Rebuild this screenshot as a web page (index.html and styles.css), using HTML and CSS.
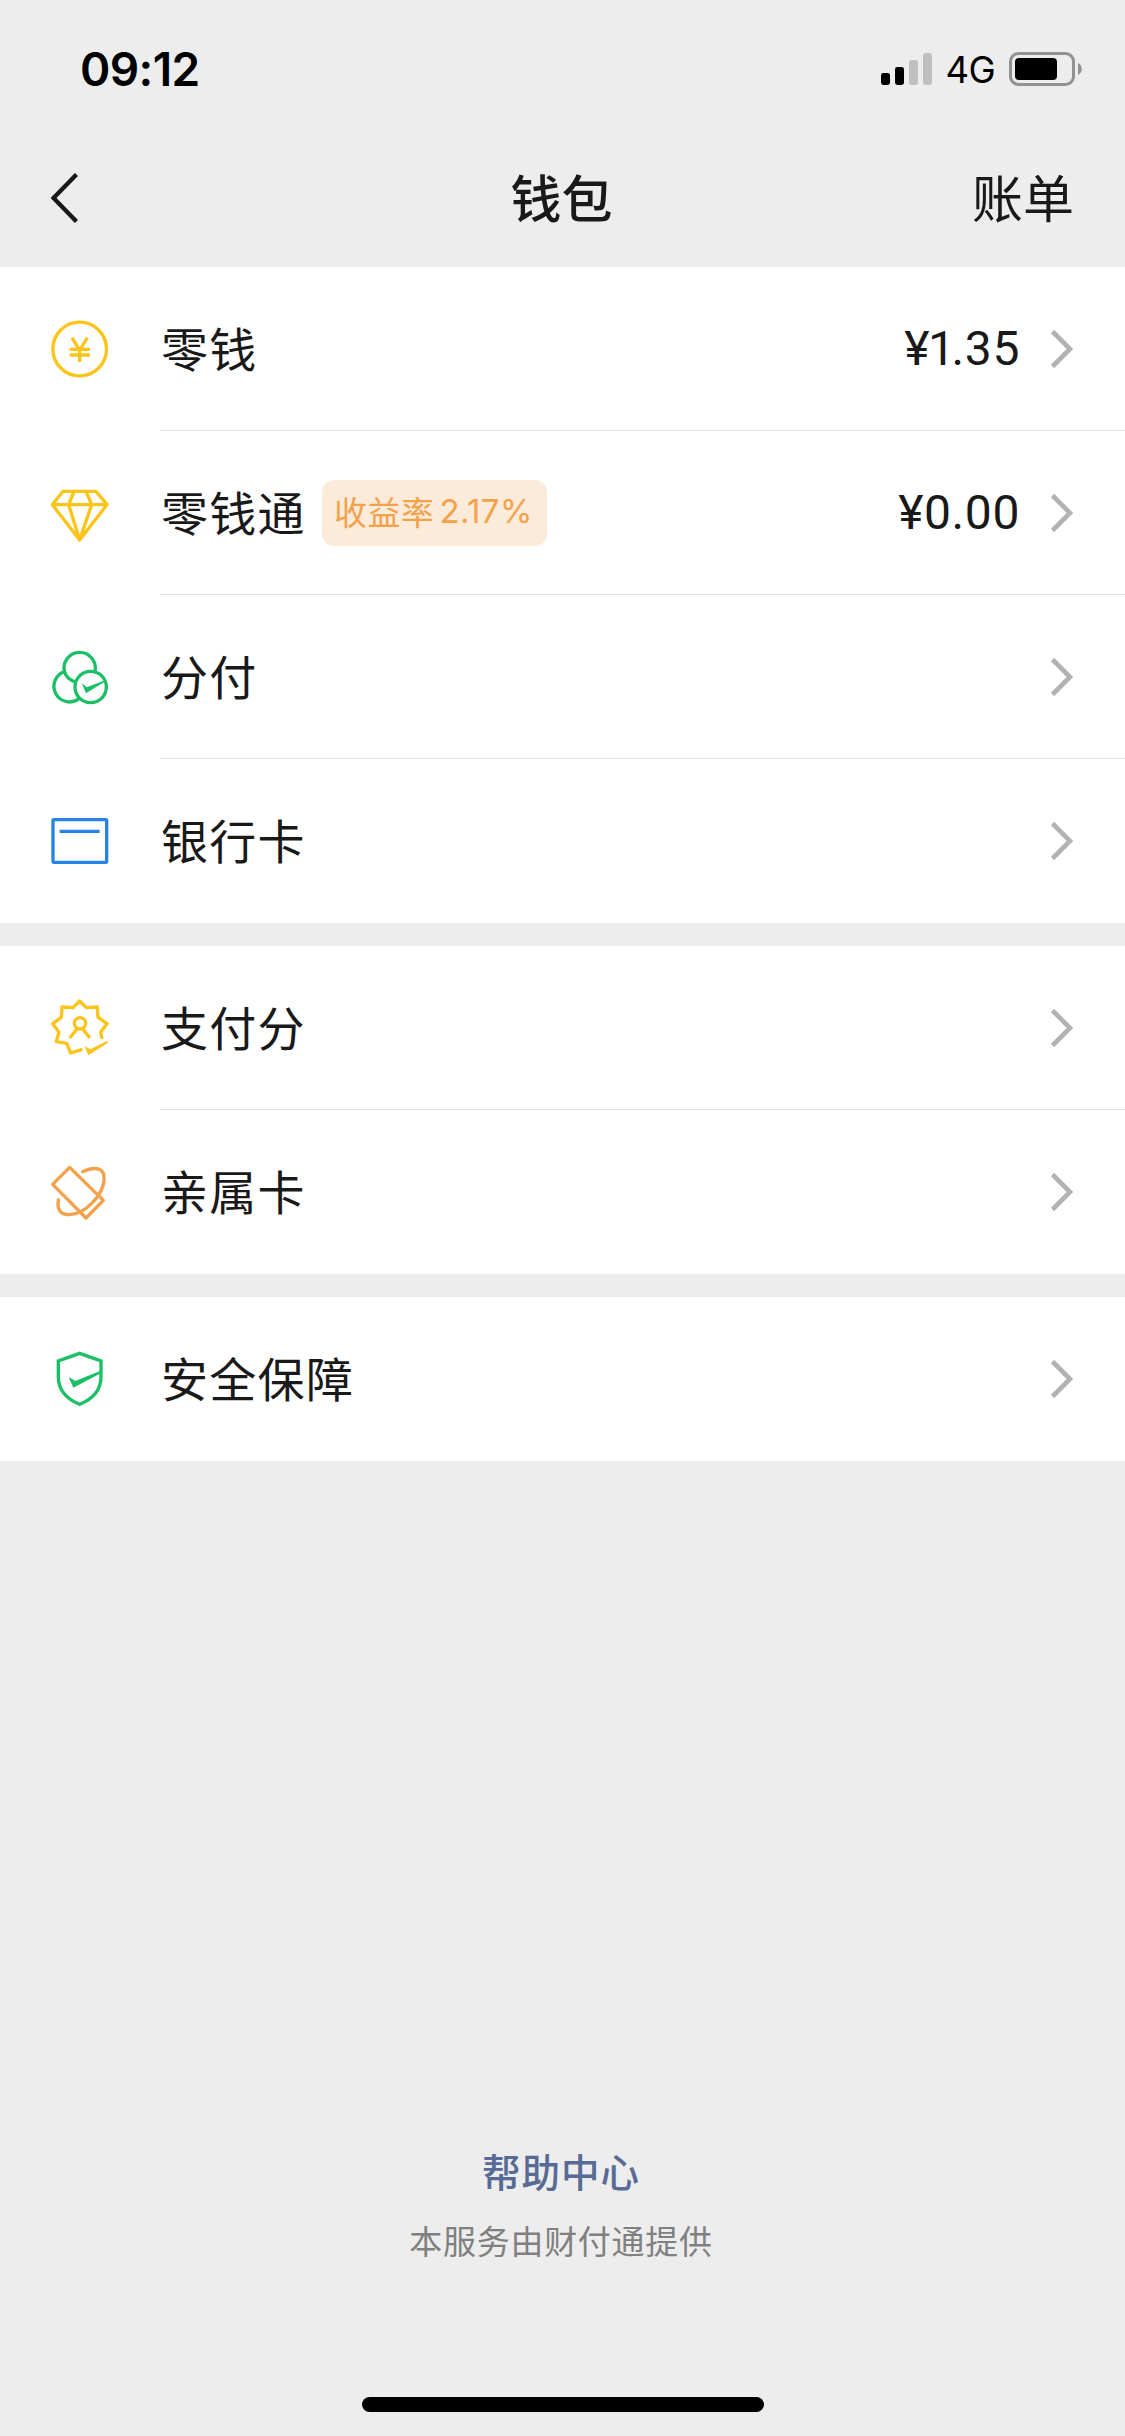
FILE: index.html
```html
<!DOCTYPE html>
<html lang="zh-CN">
<head>
<meta charset="utf-8">
<title>钱包</title>
<link rel="stylesheet" href="styles.css">
</head>
<body>
<div class="screen">
  <header class="top">
    <div class="status">
      <span class="time">09:12</span>
      <div class="indicators">
        <svg class="signal" viewBox="0 0 51 32">
          <rect x="0" y="20" width="9" height="12" rx="2.4"/>
          <rect x="14" y="14" width="9" height="18" rx="2.4"/>
          <rect class="dim" x="28" y="7" width="9" height="25" rx="2.4"/>
          <rect class="dim" x="42" y="0" width="9" height="32" rx="2.4"/>
        </svg>
        <span class="network">4G</span>
        <svg class="battery" viewBox="0 0 74 34">
          <rect class="case" x="1.500" y="1.500" width="63" height="31" rx="8"/>
          <rect x="6" y="6" width="42" height="22" rx="4"/>
          <path class="nub" d="M69 11c5 2 5 10 0 12z"/>
        </svg>
      </div>
    </div>
    <nav class="nav">
      <svg class="back" viewBox="0 0 27 50"><path d="M25.500 1.500 2.500 25l23 23.500"/></svg>
      <h1 class="title">钱包</h1>
      <span class="bill">账单</span>
    </nav>
  </header>

  <main class="groups">
    <section class="group">
      <div class="row">
        <svg class="icon yellow" viewBox="61 87 180 180">
          <circle cx="150" cy="177" r="80.500"/>
          <path d="M127 143l23 38 23-38M120 178h61M120 195h61M150 180v36"/>
        </svg>
        <div class="cell">
          <span class="label">零钱</span>
          <span class="amount">¥<span class="narrow">1</span>.35</span>
          <svg class="chevron" viewBox="0 0 24 40"><path d="M2.500 2.500 20 20 2.500 37.500"/></svg>
        </div>
      </div>
      <div class="row">
        <svg class="icon yellow" viewBox="61 579 180 180">
          <path d="M100 604h99l33 40-82 106-82-106zM68 644h164M133 604l-16 40 33 106 36-106-17-40" stroke-linejoin="round"/>
        </svg>
        <div class="cell">
          <span class="label">零钱通</span>
          <span class="badge">收益率<span class="rate">2.17%</span></span>
          <span class="amount">¥0.00</span>
          <svg class="chevron" viewBox="0 0 24 40"><path d="M2.500 2.500 20 20 2.500 37.500"/></svg>
        </div>
      </div>
      <div class="row">
        <svg class="icon green" viewBox="61 81 180 180">
          <path d="M104 154A47 47 0 1 1 196 154M104 154A47 47 0 0 0 138 186M106 154A47 47 0 1 0 150 235"/>
          <circle cx="183" cy="201" r="47"/>
          <path class="solid" d="M156 189l15 13 51-20 2 4-55 34z"/>
        </svg>
        <div class="cell">
          <span class="label">分付</span>
          <svg class="chevron" viewBox="0 0 24 40"><path d="M2.500 2.500 20 20 2.500 37.500"/></svg>
        </div>
      </div>
      <div class="row">
        <svg class="icon blue" viewBox="61 573 180 180">
          <rect x="70" y="599" width="161" height="128" rx="3"/>
          <path d="M90 634h120"/>
        </svg>
        <div class="cell">
          <span class="label">银行卡</span>
          <svg class="chevron" viewBox="0 0 24 40"><path d="M2.500 2.500 20 20 2.500 37.500"/></svg>
        </div>
      </div>
    </section>

    <section class="group">
      <div class="row">
        <svg class="icon yellow" viewBox="61 54 180 180">
          <path d="M217 177l-4-21 19-25-27-19-2-31-33 2-20-20-20 20-33-2-2 31-26 19 19 25-8 29 31 5 12 29 35-11" stroke-linejoin="round"/>
          <circle cx="151" cy="130" r="17"/>
          <path d="M120 174l23-28M181 174l-23-28"/>
          <path class="solid" d="M165 199l17 9 51-26 1 7-58 37z"/>
        </svg>
        <div class="cell">
          <span class="label">支付分</span>
          <svg class="chevron" viewBox="0 0 24 40"><path d="M2.500 2.500 20 20 2.500 37.500"/></svg>
        </div>
      </div>
      <div class="row">
        <svg class="icon orange" viewBox="61 546 180 180">
          <g stroke-linejoin="round" stroke-linecap="round">
            <path d="M120 562 221 661 169 714 69 613z"/>
            <path d="M159 575C203 556 227 566 223 603C218 646 166 703 120 704C90 704 82 687 86 660"/>
          </g>
        </svg>
        <div class="cell">
          <span class="label">亲属卡</span>
          <svg class="chevron" viewBox="0 0 24 40"><path d="M2.500 2.500 20 20 2.500 37.500"/></svg>
        </div>
      </div>
    </section>

    <section class="group">
      <div class="row">
        <svg class="icon green" viewBox="61 177 180 180">
          <path d="M150 190l64 23v47c0 42-28 68-64 83-36-15-64-41-64-83v-47z"/>
          <path class="solid" d="M117 261l20 12 76-31v8l-82 43z"/>
        </svg>
        <div class="cell">
          <span class="label">安全保障</span>
          <svg class="chevron" viewBox="0 0 24 40"><path d="M2.500 2.500 20 20 2.500 37.500"/></svg>
        </div>
      </div>
    </section>
  </main>

  <footer class="footer">
    <a class="help">帮助中心</a>
    <p class="provider">本服务由财付通提供</p>
    <div class="home-bar"></div>
  </footer>
</div>
</body>
</html>
```
FILE: styles.css
```css
* { box-sizing: border-box; }

body {
  margin: 0;
  background: #ededed;
  color: #191919;
  font-family: "Noto Sans CJK SC", sans-serif;
}

.screen {
  display: flex;
  flex-direction: column;
  width: 1125px;
  height: 2436px;
}

.top { height: 267px; }

.status {
  display: flex;
  align-items: center;
  justify-content: space-between;
  height: 138px;
  padding: 0 42px 0 80px;
  color: #000;
  font-family: Inter, sans-serif;
}

.time {
  font-size: 46px;
  font-weight: 600;
  line-height: 60px;
  letter-spacing: -.6px;
}

.indicators { display: flex; align-items: center; }
.signal { width: 51px; height: 32px; }
.signal .dim { fill: #bfbfbf; }
.network {
  margin: 2px 14px 0 14px;
  font-size: 36.500px;
  font-weight: 400;
  line-height: 44px;
  letter-spacing: -.7px;
}
.battery { width: 74px; height: 34px; }
.battery .case { fill: none; stroke: #929292; stroke-width: 3; }
.battery .nub { fill: #929292; }

.nav {
  display: grid;
  grid-template-columns: 1fr auto 1fr;
  align-items: center;
  height: 129px;
  padding: 0 51px 9px;
}
.back { width: 27px; height: 50px; fill: none; stroke: #191919; stroke-width: 4.400; }
.title,
.bill { margin: 0; padding-bottom: 5px; font-size: 51px; line-height: 70px; }
.title { padding-right: 2px; font-weight: 500; }
.bill { justify-self: end; font-weight: 400; }

.groups { display: flex; flex-direction: column; gap: 23px; }
.group { background: #fff; }
.row { display: flex; align-items: center; height: 164px; padding-left: 50px; }
.icon { width: 60px; height: 60px; margin-right: 50px; fill: none; stroke-width: 10; }
.yellow { color: #fcc419; stroke: currentColor; }
.green { color: #1abf66; stroke: currentColor; }
.blue { color: #2584e4; stroke: currentColor; }
.orange { color: #f3a14b; stroke: currentColor; }
.icon .solid { fill: currentColor; stroke: none; }

.cell {
  display: flex;
  flex: 1;
  align-items: center;
  height: 164px;
  padding-right: 51px;
  border-bottom: 1px solid #e2e2e2;
}
.row:last-child .cell { border-bottom-color: transparent; }
.label { padding: 0 0 4px 1px; font-size: 47px; line-height: 68px; letter-spacing: 1.300px; }
.badge {
  display: flex;
  align-items: center;
  width: 225px;
  height: 66px;
  margin-left: 16px;
  padding: 0 0 3px 12px;
  border-radius: 12px;
  background: #fdebda;
  color: #f3a14b;
  font-size: 33px;
  line-height: 48px;
  letter-spacing: .5px;
}
.rate { margin-left: 5px; font-family: Inter, sans-serif; font-size: 33px; letter-spacing: .4px; }
.amount { margin-left: auto; font-family: Roboto, sans-serif; font-size: 48px; line-height: 60px; letter-spacing: .6px; }
.narrow { margin: 0 -4px 0 -2px; }
.chevron { width: 24px; height: 40px; margin-left: auto; fill: none; stroke: #b2b2b2; stroke-width: 4.600; }
.amount + .chevron { margin-left: 30px; }

.footer {
  display: flex;
  flex: 1;
  flex-direction: column;
  align-items: center;
  justify-content: flex-end;
}
.help { padding-right: 3px; color: #576b95; font-size: 38.500px; font-weight: 500; line-height: 56px; letter-spacing: 1px; }
.provider { margin: 18px 0 133px; padding-right: 3px; color: #808080; font-size: 33px; line-height: 48px; letter-spacing: .7px; }
.home-bar { width: 402px; height: 15px; margin-bottom: 24px; border-radius: 8px; background: #000; }
```
